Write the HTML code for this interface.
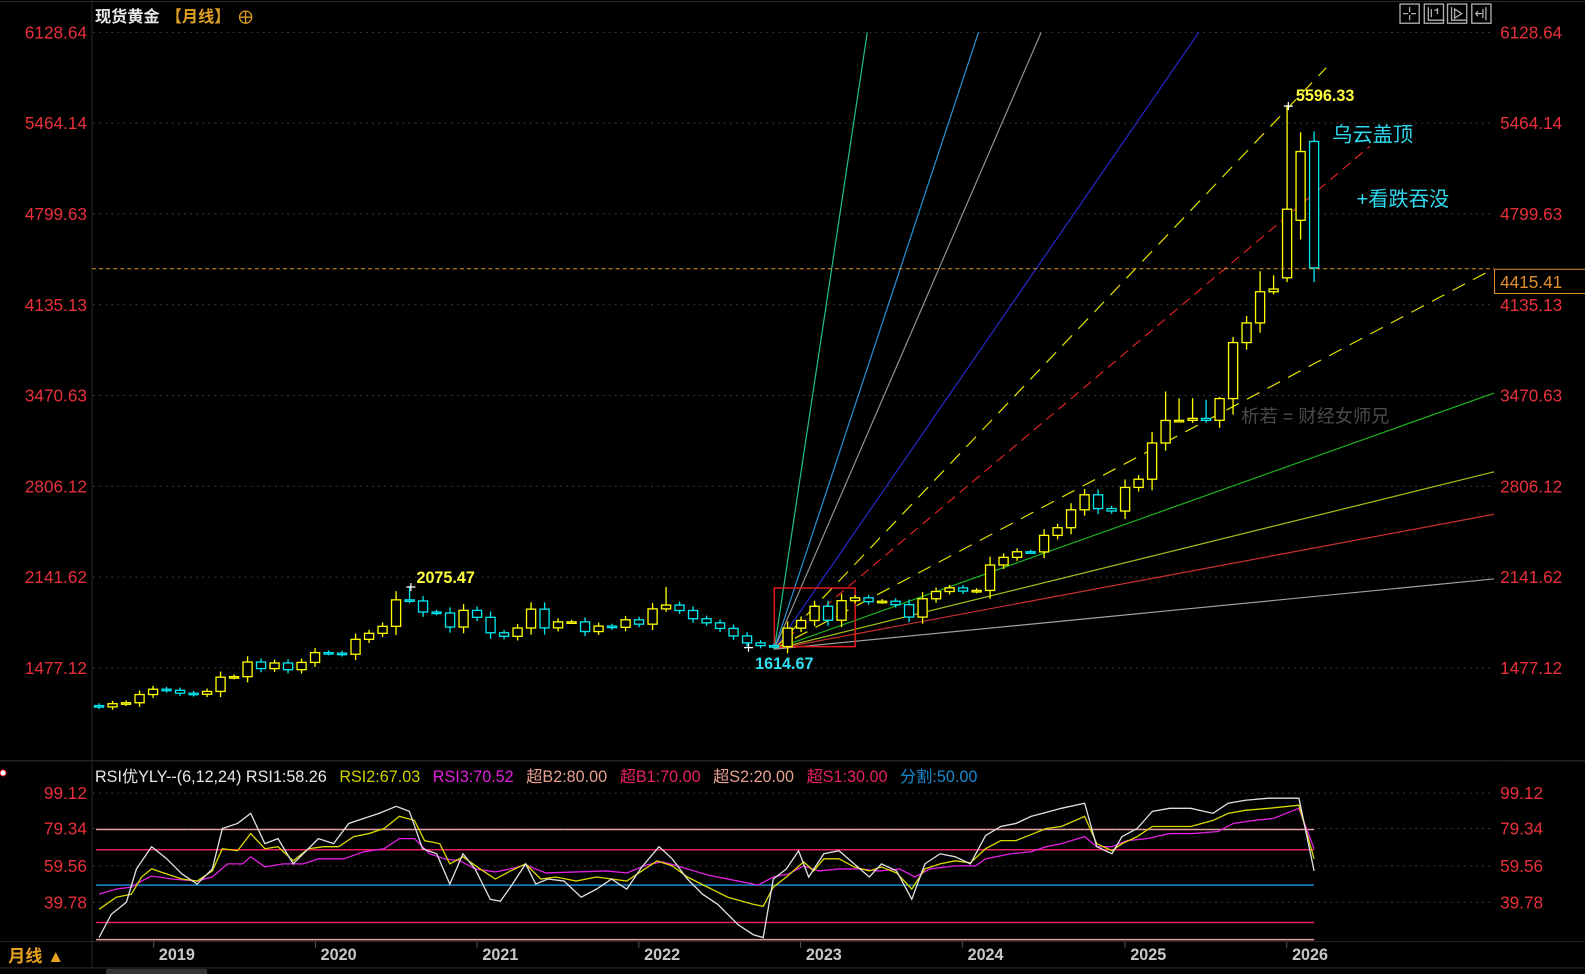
<!DOCTYPE html>
<html><head><meta charset="utf-8"><style>
html,body{margin:0;padding:0;background:#000;overflow:hidden}
svg{display:block}
text{font-family:"Liberation Sans","Noto Sans CJK SC",sans-serif}
</style></head><body>
<svg id="s" width="1585" height="974" viewBox="0 0 1568 964" preserveAspectRatio="none" xmlns="http://www.w3.org/2000/svg">
<rect width="1568" height="964" fill="#000"/>
<line x1="0" y1="1.5" x2="1568" y2="1.5" stroke="#2a2a2a"/>
<line x1="91" y1="0" x2="91" y2="958" stroke="#2a2a2a"/>
<line x1="1480" y1="0" x2="1480" y2="932" stroke="#2a2a2a" stroke-dasharray="1 17"/>
<line x1="0" y1="753" x2="1568" y2="753" stroke="#2a2a2a"/>
<line x1="0" y1="932" x2="1568" y2="932" stroke="#2a2a2a"/>
<line x1="0" y1="958" x2="1568" y2="958" stroke="#2a2a2a"/>
<g id="grid" stroke="#3a3a3a" stroke-dasharray="2 4"></g>
<g id="fan"></g>
<g id="candles"></g>
<g id="labels" font-size="17" fill="#e8303c"></g>
<text x="94" y="22" font-size="16" fill="#e8e8e8" font-weight="bold">现货黄金</text>
<text x="164" y="22" font-size="16" fill="#e0a020" font-weight="bold">【月线】</text>
<circle cx="243" cy="17" r="6" fill="none" stroke="#e0a020" stroke-width="1.3"/>
<line x1="237" y1="17" x2="249" y2="17" stroke="#e0a020" stroke-width="1.3"/>
<line x1="243" y1="11" x2="243" y2="23" stroke="#e0a020" stroke-width="1.3"/>
<g fill="none" stroke="#b0b0b0" stroke-width="1.3">
<rect x="1385" y="4" width="19" height="19"/><rect x="1409" y="4" width="19" height="19"/><rect x="1432" y="4" width="19" height="19"/><rect x="1456" y="4" width="19" height="19"/>
<path d="M1394.5 7v5M1394.5 15v5M1388 13.5h5M1396 13.5h5"/>
<path d="M1413 7v13h16M1416 9v8M1419 10h4M1422 8v6M1413 20h16"/>
<path d="M1436 7v13h15M1439 9v9l7-4.5z"/>
<path d="M1470 7v13M1467 9v9M1460 13.5h6M1462 11l-2 2.5 2 2.5"/>
</g>
<line x1="91" y1="266" x2="1478" y2="266" stroke="#e09030" stroke-dasharray="4 3"/>
<rect x="1478.5" y="266.5" width="90" height="24" fill="#000" stroke="#e09030"/>
<text x="1484" y="285" font-size="17" fill="#e09030">4415.41</text>
<text x="412" y="577" font-size="16" font-weight="bold" fill="#ffff40">2075.47</text>
<text x="1282" y="100" font-size="16" font-weight="bold" fill="#ffff40">5596.33</text>
<text x="747" y="662" font-size="16" font-weight="bold" fill="#30e0f0">1614.67</text>
<text x="1318" y="140" font-size="20" fill="#30d8f0">乌云盖顶</text>
<text x="1342" y="204" font-size="20" fill="#30d8f0">+看跌吞没</text>
<text x="1228" y="418" font-size="18" fill="#4a4a4a">析若 = 财经女师兄</text>
<g stroke="#fff" stroke-width="1.2">
<path d="M402 581h9M406.5 577v8M1270 105h9M1274.5 101v8M736 641h9M740.5 637v8"/>
</g>
<text font-size="16" y="774">
<tspan x="94" fill="#e8e8e8">RSI优YLY--(6,12,24) RSI1:58.26</tspan>
<tspan dx="8" fill="#d0d000">RSI2:67.03</tspan>
<tspan dx="8" fill="#e020e0">RSI3:70.52</tspan>
<tspan dx="8" fill="#e8a090">超B2:80.00</tspan>
<tspan dx="8" fill="#e82060">超B1:70.00</tspan>
<tspan dx="8" fill="#e8a090">超S2:20.00</tspan>
<tspan dx="8" fill="#e82060">超S1:30.00</tspan>
<tspan dx="8" fill="#1a8ad0">分割:50.00</tspan>
</text>
<circle cx="3" cy="765" r="3" fill="#fff" stroke="#e02020"/>
<g stroke-width="1.5">
<line x1="95" y1="821" x2="1300" y2="821" stroke="#e8a0a0"/>
<line x1="95" y1="841" x2="1300" y2="841" stroke="#e82060"/>
<line x1="95" y1="876" x2="1300" y2="876" stroke="#1a8ad0"/>
<line x1="95" y1="913" x2="1300" y2="913" stroke="#e82060"/>
<line x1="95" y1="930" x2="1300" y2="930" stroke="#e8a0a0"/>
</g>
<g id="rsigrid" stroke="#3a3a3a" stroke-dasharray="2 4"></g>
<g id="rsi" fill="none" stroke-width="1.3"></g>
<g id="years" font-size="16" fill="#c8c8c8" text-anchor="middle" font-weight="bold"></g>
<text x="8" y="952" font-size="17" fill="#e8a020" font-weight="bold">月线 ▲</text>
<rect x="105" y="959" width="100" height="5" fill="#333"/>
</svg>
<script>
const NS="http://www.w3.org/2000/svg";
function el(p,t,a,txt){const e=document.createElementNS(NS,t);for(const k in a)e.setAttribute(k,a[k]);if(txt)e.textContent=txt;document.getElementById(p).appendChild(e);return e;}
const Y=p=>32+(6128.64-p)*0.13523;
const lv=[6128.64,5464.14,4799.63,4135.13,3470.63,2806.12,2141.62,1477.12];
lv.forEach(v=>{const y=Y(v);el('grid','line',{x1:92,y1:y,x2:1478,y2:y});
el('labels','text',{x:86,y:y+6,'text-anchor':'end'},v.toFixed(2));
el('labels','text',{x:1484,y:y+6},v.toFixed(2));});
const rl=[[99.12,785],[79.34,820],[59.56,857],[39.78,893]];
rl.forEach(([v,y])=>{el('rsigrid','line',{x1:92,y1:y,x2:1478,y2:y});
el('labels','text',{x:86,y:y+6,'text-anchor':'end'},v.toFixed(2));
el('labels','text',{x:1484,y:y+6},v.toFixed(2));});
[[2019,175],[2020,335],[2021,495],[2022,655],[2023,815],[2024,975],[2025,1136],[2026,1296]].forEach(([t,x])=>{
el('years','text',{x:x,y:950},t);el('grid','line',{x1:x-23,y1:932,x2:x-23,y2:938,'stroke-dasharray':'none',stroke:'#555'});});
const C=[1192,1215,1222,1282,1321,1313,1292,1284,1305,1409,1413,1520,1472,1513,1464,1517,
1589,1585,1577,1686,1730,1781,1975,1967,1886,1879,1776,1898,1847,1734,1708,1769,1907,1770,1814,1814,1743,1783,1774,1829,
1797,1909,1937,1897,1837,1807,1766,1711,1660,1640,1633,1768,1824,1928,1826,1969,1990,1962,1965,1940,1849,1983,2036,2063,
2039,2044,2230,2286,2327,2326,2447,2503,2634,2744,2643,2625,2798,2858,3123,3288,3289,3303,3289,3448,3858,4002,4230,4250,4834,5256,4405];
const O={0:1201,88:4332,89:4753,90:5330};
const H={23:2075,42:2070,88:5596,90:5404,86:4380,87:4350,84:3900,79:3500,80:3450,81:3451,82:3440,83:3460};
const L={50:1614,90:4300,88:4300};
const s=(1300-98)/90;
for(let i=0;i<C.length;i++){
 const x=98+i*s,c=C[i],o=O[i]!==undefined?O[i]:C[i-1];
 const up=c>=o,col=up?'#ffff00':'#00e8f0';
 const top=Math.max(o,c),bot=Math.min(o,c),r=top-bot;
 const hi=H[i]||top+Math.max(12,r*0.25+15),lo=L[i]||bot-Math.max(12,r*0.25+15);
 el('candles','line',{x1:x,y1:Y(hi),x2:x,y2:Y(lo),stroke:col,'stroke-width':1.3});
 const h=Math.max(Y(bot)-Y(top),1.5);
 el('candles','rect',{x:x-4.5,y:Y(top),width:9,height:h,fill:'#000',stroke:col,'stroke-width':1.3});
}
const ox=766,oy=Y(1614);
const F=[[858,32,'#20c080',0],[968,32,'#2a90d8',0],[1030,32,'#909090',0],[1186,32,'#2828c8',0],
[1312,67,'#e0e000',1],[1355,145,'#d82020',1],[1470,270,'#e0e000',1],[1478,389,'#20b020',0],[1478,467,'#a0c020',0],[1478,509,'#c83030',0],[1478,573,'#a0a0a0',0]];
F.forEach(([x,y,c,d])=>{const a={x1:ox,y1:oy,x2:x,y2:y,stroke:c,'stroke-width':1.2};if(d)a['stroke-dasharray']=(c=='#d82020'?'10 6':'14 9');el('fan','line',a);});
el('fan','rect',{x:766,y:582,width:80,height:58,fill:'none',stroke:'#e01818','stroke-width':1.5});
const W=[[98,928],[110,905],[125,893],[135,860],[150,838],[165,850],[180,865],[195,875],[210,860],[220,820],[235,815],[248,805],[262,835],[275,830],[290,855],[300,845],[315,830],[330,835],[345,815],[360,810],[375,805],[392,798],[405,803],[418,840],[432,845],[445,875],[458,845],[470,860],[485,890],[495,892],[505,878],[520,855],[530,875],[542,870],[558,872],[575,888],[590,880],[605,870],[620,880],[635,858],[652,838],[665,850],[680,870],[695,885],[710,895],[730,915],[745,925],[755,928],[765,870],[778,860],[790,842],[800,868],[815,845],[830,842],[845,855],[860,868],[872,855],[887,862],[902,890],[915,855],[930,845],[945,848],[960,855],[975,827],[990,818],[1005,815],[1020,808],[1035,804],[1050,800],[1073,795],[1085,838],[1100,845],[1110,828],[1125,820],[1140,803],[1157,800],[1178,800],[1200,805],[1215,795],[1232,792],[1255,790],[1285,790],[1300,862]];
const YL=[[98,900],[115,888],[130,885],[140,868],[150,860],[165,865],[180,870],[195,872],[210,862],[220,840],[235,842],[248,825],[262,840],[275,838],[290,852],[305,840],[320,838],[335,838],[350,828],[365,825],[380,820],[395,808],[410,812],[420,832],[435,835],[445,855],[458,848],[475,860],[490,870],[505,862],[520,855],[535,870],[550,868],[570,872],[590,868],[605,870],[620,872],[635,862],[650,852],[665,857],[680,868],[700,878],[720,888],[745,895],[755,897],[765,878],[778,868],[795,853],[805,862],[815,850],[830,850],[845,858],[860,862],[872,858],[887,864],[902,880],[915,860],[930,855],[945,852],[960,854],[975,840],[990,832],[1005,832],[1020,826],[1035,820],[1050,818],[1073,808],[1085,835],[1100,842],[1110,835],[1125,828],[1140,818],[1157,818],[1178,818],[1200,812],[1215,805],[1232,802],[1255,800],[1285,797],[1300,850]];
const M=[[98,885],[115,880],[130,878],[140,872],[150,867],[170,870],[195,872],[210,868],[225,855],[240,855],[248,848],[262,858],[280,855],[300,855],[315,850],[340,850],[360,843],[380,840],[395,830],[410,830],[425,845],[440,850],[455,852],[470,860],[490,863],[505,860],[520,856],[540,864],[570,863],[600,862],[620,864],[640,856],[655,853],[670,857],[700,866],[730,872],[750,876],[765,868],[780,865],[795,857],[810,862],[830,860],[850,860],[870,862],[890,860],[905,868],[920,860],[945,857],[965,857],[975,850],[1000,845],[1020,843],[1035,838],[1050,835],[1073,828],[1085,838],[1100,838],[1115,832],[1135,830],[1157,825],[1180,825],[1205,823],[1220,815],[1240,812],[1260,810],[1285,800],[1300,840]];
[[M,'#e020e0'],[YL,'#d8d800'],[W,'#e0e0e0']].forEach(([p,c])=>el('rsi','polyline',{points:p.map(q=>q.join(',')).join(' '),stroke:c}));
</script>
</body></html>
